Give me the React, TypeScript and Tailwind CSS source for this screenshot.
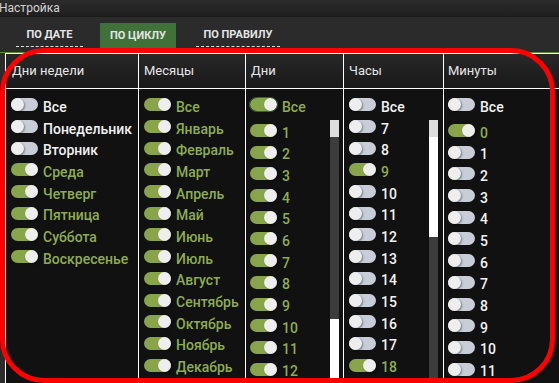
import React from 'react';

type Item = { label: string; on: boolean };

function Toggle({ on, focus }: { on: boolean; focus?: boolean }) {
  return (
    <span
      className={`flex h-[13px] w-[27px] shrink-0 rounded-full ${on ? 'justify-end bg-[#88a54b]' : 'justify-start bg-[#c9cdd7]'} ${focus ? 'outline outline-1 outline-[#2f6a24]' : ''}`}
    >
      <span className="h-[13px] w-[13px] rounded-full bg-[#eeeeee] shadow-[1px_1px_2px_rgba(0,0,0,0.4)]" />
    </span>
  );
}

function Row({ label, on, focus }: { label: string; on: boolean; focus?: boolean }) {
  return (
    <div className="flex h-[21.7px] shrink-0 items-center gap-[5px]">
      <Toggle on={on} focus={focus} />
      <span
        className={`whitespace-nowrap pt-[4px] text-[14px] font-medium leading-none ${on ? 'text-[#8eac52]' : 'text-[#f2f2f2]'}`}
      >
        {label}
      </span>
    </div>
  );
}

// полоса прокрутки: три участка
function Scrollbar({ middle, bottom, mr }: { middle: string; bottom: string; mr: string }) {
  return (
    <div className={`mt-[4px] flex w-[9px] shrink-0 flex-col ${mr}`}>
      <div className="h-[17px] bg-[#dddddd]" />
      <div className={middle} />
      <div className={`flex-1 ${bottom}`} />
    </div>
  );
}

const weekdays: Item[] = [
  { label: 'Все', on: false },
  { label: 'Понедельник', on: false },
  { label: 'Вторник', on: false },
  { label: 'Среда', on: true },
  { label: 'Четверг', on: true },
  { label: 'Пятница', on: true },
  { label: 'Суббота', on: true },
  { label: 'Воскресенье', on: true },
];

const months = ['Все', 'Январь', 'Февраль', 'Март', 'Апрель', 'Май', 'Июнь', 'Июль', 'Август', 'Сентябрь', 'Октябрь', 'Ноябрь', 'Декабрь'];

const days = Array.from({ length: 12 }, (_, i) => i + 1);
const hours = Array.from({ length: 12 }, (_, i) => i + 7);
const minutes = Array.from({ length: 12 }, (_, i) => i);

function Header({ title, pl }: { title: string; pl: string }) {
  return (
    <div
      className={`flex h-[35px] shrink-0 items-center border-b border-white bg-gradient-to-b from-[#282828] to-[#191919] ${pl} text-[13px] text-[#e6e6e6]`}
    >
      {title}
    </div>
  );
}

export default function App() {
  return (
    <div className="relative flex h-[383px] w-[559px] flex-col overflow-hidden bg-[#2b2b2b] font-['Roboto',sans-serif]">
      {/* заголовок */}
      <div className="flex h-[17px] shrink-0 items-center border-b border-[#1a1a1a] bg-gradient-to-b from-[#2c2c2c] to-[#1f1f1f] text-[12px] leading-none text-[#d2d2d2]">
        <span className="-ml-[1px]">Настройка</span>
      </div>

      {/* вкладки */}
      <div className="flex h-[35px] shrink-0 items-start pl-[16px] pt-[6px] text-[11px] font-bold leading-none text-[#e4e4e4]">
        <button className="flex h-[24px] w-[67px] items-center justify-center border-b border-dashed border-[#dcdcdc]">
          ПО ДАТЕ
        </button>
        <button className="ml-[17px] flex h-[25px] w-[76px] items-center justify-center bg-[#3f7139]">
          ПО ЦИКЛУ
        </button>
        <button className="ml-[20px] flex h-[24px] w-[84px] items-center justify-center border-b border-dashed border-[#dcdcdc]">
          ПО ПРАВИЛУ
        </button>
      </div>
      <div className="h-[1px] shrink-0 bg-[#5f8a3a]" />

      {/* таблица */}
      <div className="ml-[5px] flex min-h-0 flex-1 border-t border-white bg-[#111111]">
        <div className="flex w-[133px] shrink-0 flex-col border-l border-white">
          <Header title="Дни недели" pl="pl-[6px]" />
          <div className="flex flex-col pl-[5px] pt-[5px]">
            {weekdays.map(w => (
              <Row key={w.label} label={w.label} on={w.on} />
            ))}
          </div>
        </div>

        <div className="flex w-[107px] shrink-0 flex-col border-l border-white">
          <Header title="Месяцы" pl="pl-[5px]" />
          <div className="flex flex-col pl-[5px] pt-[5px]">
            {months.map(m => (
              <Row key={m} label={m} on />
            ))}
          </div>
        </div>

        <div className="flex w-[98px] shrink-0 flex-col border-l border-white">
          <Header title="Дни" pl="pl-[5px]" />
          <div className="flex min-h-0 flex-1 flex-col pt-[5px]">
            <div className="pl-[4px]">
              <Row label="Все" on focus />
            </div>
            <div className="flex min-h-0 flex-1">
              <div className="flex min-w-0 flex-1 flex-col overflow-hidden pl-[4px] pt-[4px]">
                {days.map(d => (
                  <Row key={d} label={String(d)} on />
                ))}
              </div>
              <Scrollbar middle="h-[182px] bg-[#3c3c3c]" bottom="bg-white" mr="mr-[4px]" />
            </div>
          </div>
        </div>

        <div className="flex w-[100px] shrink-0 flex-col border-l border-white">
          <Header title="Часы" pl="pl-[5px]" />
          <div className="flex min-h-0 flex-1 flex-col pt-[5px]">
            <div className="pl-[5px]">
              <Row label="Все" on={false} />
            </div>
            <div className="flex min-h-0 flex-1">
              <div className="flex min-w-0 flex-1 flex-col overflow-hidden pl-[5px]">
                {hours.map(h => (
                  <Row key={h} label={String(h)} on={h === 9 || h === 18} />
                ))}
              </div>
              <Scrollbar middle="h-[100px] bg-white" bottom="bg-[#3c3c3c]" mr="mr-[5px]" />
            </div>
          </div>
        </div>

        <div className="flex min-w-0 flex-1 flex-col border-l border-white">
          <Header title="Минуты" pl="pl-[4px]" />
          <div className="flex min-h-0 flex-1 flex-col pl-[4px] pt-[5px]">
            <Row label="Все" on={false} />
            <div className="flex min-h-0 flex-1 flex-col overflow-hidden pt-[4px]">
              {minutes.map(m => (
                <Row key={m} label={String(m)} on={m === 0} />
              ))}
            </div>
          </div>
        </div>
      </div>

      {/* красная рамка-пометка поверх */}
      <div className="pointer-events-none absolute left-0 top-[48px] h-[335px] w-[555px] rounded-[44px] border-[5px] border-[#ff0000]" />
    </div>
  );
}
